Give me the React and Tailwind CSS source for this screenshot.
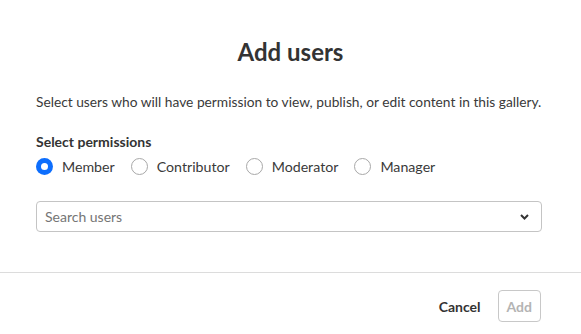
import React, { useState } from 'react';

const options = ['Member', 'Contributor', 'Moderator', 'Manager'];

function Radio({ label, checked, onChange }) {
  return (
    <label className="flex items-center cursor-pointer mr-[16px]" onClick={onChange}>
      {checked ? (
        <span className="w-[17px] h-[17px] rounded-full bg-[#0d6efd] flex items-center justify-center">
          <span className="w-[7px] h-[7px] rounded-full bg-white" />
        </span>
      ) : (
        <span className="w-[17px] h-[17px] rounded-full border border-[#a8a8a8] bg-white" />
      )}
      <span className="ml-[9px] text-[14.2px] text-[#3a3a3a]">{label}</span>
    </label>
  );
}

export default function App() {
  const [perm, setPerm] = useState('Member');

  return (
    <div className="w-[581px] h-[334px] bg-white overflow-hidden" style={{ fontFamily: 'Lato, "Open Sans", sans-serif' }}>
      <div className="px-[36px] pt-[36px]">
        <h1 className="text-center text-[24px] font-bold text-[#333] leading-[32px]">Add users</h1>
        <p className="mt-[24px] text-[13.75px] text-[#3a3a3a] leading-[20px] whitespace-nowrap">
          Select users who will have permission to view, publish, or edit content in this gallery.
        </p>
        <div className="mt-[20px] text-[14px] font-bold text-[#333] leading-[20px]">Select permissions</div>
        <div className="mt-[4px] flex items-center h-[22px]">
          {options.map((o) => (
            <Radio key={o} label={o} checked={perm === o} onChange={() => setPerm(o)} />
          ))}
        </div>
        <div className="mt-[23px] w-[506px] h-[31px] border border-[#c4c4c4] rounded-[4px] flex items-center justify-between pl-[8px] pr-[12px]">
          <span className="text-[14px] text-[#757575]">Search users</span>
          <svg width="9" height="6" viewBox="0 0 9 6">
            <path d="M1 1l3.5 3.5L8 1" fill="none" stroke="#333" strokeWidth="2" />
          </svg>
        </div>
      </div>
      <div className="mt-[40px] border-t border-[#dcdcdc]" />
      <div className="flex items-center justify-end pr-[40px] pt-[17px]">
        <button className="text-[14px] font-bold text-[#333] mr-[17px]">Cancel</button>
        <button className="h-[32px] px-[8px] border border-[#c8c8c8] rounded-[4px] text-[14px] font-bold text-[#b4b4b4]">Add</button>
      </div>
    </div>
  );
}
